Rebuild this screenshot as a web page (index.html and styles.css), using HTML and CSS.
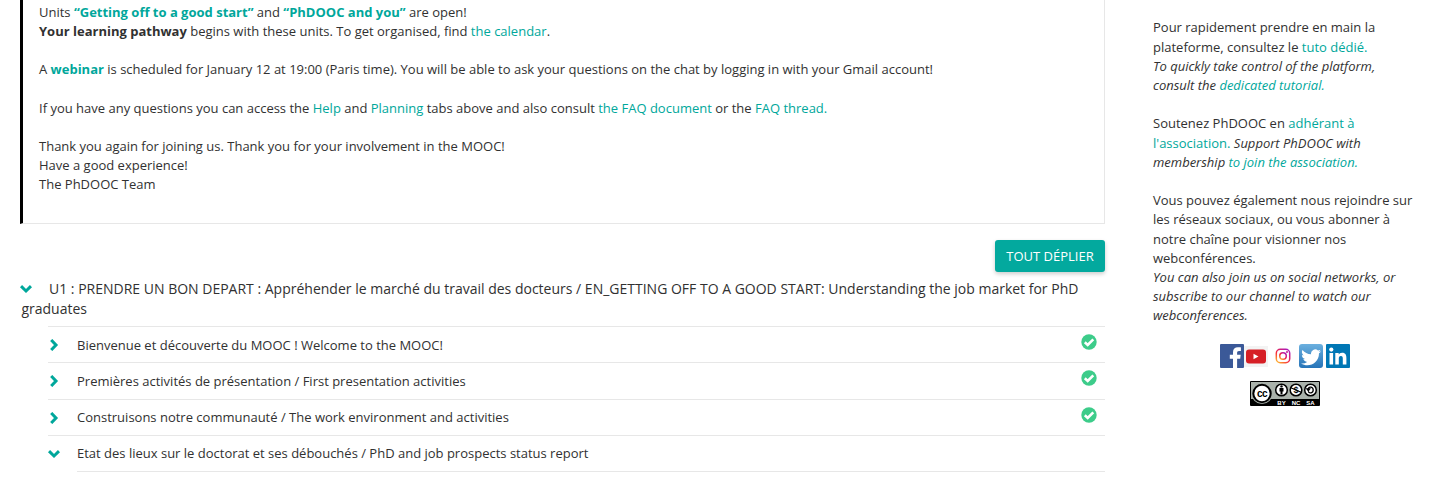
FILE: index.html
```html
<!DOCTYPE html>
<html lang="fr">
<head>
    <meta charset="UTF-8">
    <meta name="viewport" content="width=device-width, initial-scale=1.0">
    <title>PhDOOC</title>

    <link rel="stylesheet" href="styles.css">
</head>
<body>
    <div class="course">
        <main class="main-content">
            <!-- Welcome message -->
            <section class="message">
                <p>Units <a href="#" class="strong">“Getting off to a good start”</a> and <a href="#" class="strong">“PhDOOC and you”</a> are open!<br>
                <strong>Your learning pathway</strong> begins with these units. To get organised, find <a href="#">the calendar</a>.</p>
                <p>A <a href="#" class="strong">webinar</a> is scheduled for January 12 at 19:00 (Paris time). You will be able to ask your questions on the chat by logging in with your Gmail account!</p>
                <p>If you have any questions you can access the <a href="#">Help</a> and <a href="#">Planning</a> tabs above and also consult <a href="#">the FAQ document</a> or the <a href="#">FAQ thread.</a></p>
                <p>Thank you again for joining us. Thank you for your involvement in the MOOC!<br>
                Have a good experience!<br>
                The PhDOOC Team</p>
            </section>

            <div class="toolbar">
                <button class="btn-expand">TOUT DÉPLIER</button>
            </div>

            <!-- Course outline -->
            <section class="outline">
                <h3 class="section-title"><svg class="chevron" viewBox="0 0 12 12"><path d="M1 3.200 6 8l5-4.800"/></svg>U1 : PRENDRE UN BON DEPART : Appréhender le marché du travail des docteurs / EN_GETTING OFF TO A GOOD START: Understanding the job market for PhD graduates</h3>
                <ol class="subsections">
                    <li class="subsection">
                        <svg class="chevron" viewBox="0 0 12 12"><path d="M3.200 1 8 6l-4.800 5"/></svg>
                        <span>Bienvenue et découverte du MOOC ! Welcome to the MOOC!</span>
                        <svg class="check" viewBox="0 0 16 16"><circle cx="8" cy="8" r="7.700"/><path d="M3.800 8.300 6.700 11l5.600-5.700"/></svg>
                    </li>
                    <li class="subsection">
                        <svg class="chevron" viewBox="0 0 12 12"><path d="M3.200 1 8 6l-4.800 5"/></svg>
                        <span>Premières activités de présentation / First presentation activities</span>
                        <svg class="check" viewBox="0 0 16 16"><circle cx="8" cy="8" r="7.700"/><path d="M3.800 8.300 6.700 11l5.600-5.700"/></svg>
                    </li>
                    <li class="subsection">
                        <svg class="chevron" viewBox="0 0 12 12"><path d="M3.200 1 8 6l-4.800 5"/></svg>
                        <span>Construisons notre communauté / The work environment and activities</span>
                        <svg class="check" viewBox="0 0 16 16"><circle cx="8" cy="8" r="7.700"/><path d="M3.800 8.300 6.700 11l5.600-5.700"/></svg>
                    </li>
                    <li class="subsection">
                        <svg class="chevron" viewBox="0 0 12 12"><path d="M1 3.200 6 8l5-4.800"/></svg>
                        <span>Etat des lieux sur le doctorat et ses débouchés / PhD and job prospects status report</span>
                    </li>
                </ol>
                <div class="units"></div>
            </section>
        </main>

        <!-- Handouts -->
        <aside class="sidebar">
            <p>Pour rapidement prendre en main la plateforme, consultez le <a href="#">tuto dédié.</a><br>
            <em>To quickly take control of the platform, consult the <a href="#">dedicated tutorial.</a></em></p>
            <p>Soutenez PhDOOC en <a href="#">adhérant à l'association.</a> <em>Support PhDOOC with membership <a href="#">to join the association.</a></em></p>
            <p>Vous pouvez également nous rejoindre sur les réseaux sociaux, ou vous abonner à notre chaîne pour visionner nos webconférences.<br>
            <em>You can also join us on social networks, or subscribe to our channel to watch our webconferences.</em></p>

            <div class="social">
                <!-- Facebook -->
                <svg width="24" height="24" viewBox="0 0 24 24">
                    <rect width="24" height="24" rx="1" fill="#3b5998"/>
                    <path d="M13 24v-9.200H9.800v-4H13V8.300c0-3.200 2-5 4.900-5 1.300 0 2.600.1 3 .1v3.500h-1.900c-1.500 0-1.900.8-1.900 1.900v2h3.600l-.5 4h-3.100V24z" fill="#fff"/>
                </svg>
                <!-- YouTube -->
                <svg width="24" height="24" viewBox="0 0 24 24">
                    <rect y="2" width="24" height="21" fill="#f3f3f3"/>
                    <rect x="2" y="5.500" width="20" height="14" rx="3" fill="#d61f26"/>
                    <path d="M9.500 9.700v5.600l5-2.800z" fill="#fff"/>
                </svg>
                <!-- Instagram -->
                <svg class="instagram" width="24" height="24" viewBox="0 0 24 24">
                    <defs>
                        <linearGradient id="insta" x1="0.100" y1="1" x2="0.900" y2="0">
                            <stop offset="0" stop-color="#ffb52e"/>
                            <stop offset="0.450" stop-color="#f5233f"/>
                            <stop offset="1" stop-color="#a51cc4"/>
                        </linearGradient>
                    </defs>
                    <rect x="5.300" y="5.300" width="13.400" height="13.400" rx="4" fill="none" stroke="url(#insta)" stroke-width="1.500"/>
                    <circle cx="12" cy="12" r="3.300" fill="none" stroke="url(#insta)" stroke-width="1.500"/>
                    <circle cx="16" cy="8" r="1" fill="#c41c8d"/>
                </svg>
                <!-- Twitter -->
                <svg class="twitter" width="24" height="24" viewBox="0 0 24 24">
                    <defs>
                        <linearGradient id="tw" x1="0" y1="0" x2="0" y2="1">
                            <stop offset="0" stop-color="#6bb0df"/>
                            <stop offset="1" stop-color="#2674b8"/>
                        </linearGradient>
                    </defs>
                    <rect width="24" height="24" rx="3" fill="url(#tw)"/>
                    <path d="M22 7.200c-.7.300-1.400.5-2.200.6.800-.5 1.400-1.200 1.700-2.100-.8.400-1.600.8-2.500.9a4.100 4.100 0 0 0-6.900 3.700C8.600 10.100 5.600 8.500 3.500 6c-1.100 2-.5 4.200 1.200 5.400-.7 0-1.300-.2-1.800-.5 0 2 1.400 3.700 3.200 4.100-.6.200-1.200.2-1.800.1.500 1.600 2 2.700 3.800 2.800A8.200 8.200 0 0 1 2 19.500c7.900 4.600 18-.2 18-10.200.8-.6 1.500-1.300 2-2.100z" fill="#fff"/>
                </svg>
                <!-- LinkedIn -->
                <svg class="linkedin" width="24" height="24" viewBox="0 0 24 24">
                    <rect width="24" height="24" rx="1" fill="#0077b5"/>
                    <circle cx="5.300" cy="5.600" r="2.100" fill="#fff"/>
                    <rect x="3.500" y="9" width="3.600" height="11.500" fill="#fff"/>
                    <path d="M9.300 9h3.400v1.600c.5-.9 1.700-1.900 3.400-1.900 3.600 0 4.300 2.400 4.300 5.500v6.300h-3.600v-5.600c0-1.300 0-3-1.900-3s-2.100 1.400-2.100 2.900v5.700H9.300z" fill="#fff"/>
                </svg>
            </div>

            <!-- Creative Commons badge -->
            <svg class="license" width="70" height="25" viewBox="0 0 70 25">
                <rect width="70" height="25" rx="1" fill="#000"/>
                <rect x="1" y="1" width="68" height="17" fill="#aab2ab"/>
                <circle cx="12" cy="12.500" r="10.500" fill="#aab2ab"/>
                <circle cx="12" cy="12.500" r="8.700" fill="#fff" stroke="#000" stroke-width="2"/>
                <text class="cc" x="12" y="15.500">cc</text>
                <g fill="#fff" stroke="#000" stroke-width="1.500">
                    <circle cx="31.500" cy="9" r="5.800"/>
                    <circle cx="46" cy="9" r="5.800"/>
                    <circle cx="60.500" cy="9" r="5.800"/>
                </g>
                <circle cx="31.500" cy="5.400" r="1.200"/>
                <path d="M29.500 7h4v3.500h-1v3h-2v-3h-1z"/>
                <text class="symbol" x="46" y="12.200">$</text>
                <path d="m40.800 6.700 10.400 4.600" stroke="#000" stroke-width="1.200"/>
                <path d="M58.300 7.500c.8-2.200 4.900-1.700 4.900 1.500s-4.100 3.700-4.900 1.500M57 8h2.600l-1.300 1.600z" fill="none" stroke="#000" stroke-width="1.300"/>
                <text class="label" x="31.500" y="23.500">BY</text>
                <text class="label" x="46" y="23.500">NC</text>
                <text class="label" x="60.500" y="23.500">SA</text>
            </svg>
        </aside>
    </div>
</body>
</html>
```

FILE: styles.css
```css
* {
    margin: 0;
    padding: 0;
    box-sizing: border-box;
}

body {
    font-family: 'Open Sans', Arial, sans-serif;
    font-size: 13px;
    line-height: 19.2px;
    color: #313131;
    background: #fff;
    overflow: hidden;
}

a {
    color: #00a79b;
    text-decoration: none;
}

strong,
.strong {
    font-weight: 700;
}

.course {
    display: flex;
    gap: 48px;
    padding: 0 20px;
}

.main-content {
    width: 1085px;
    flex-shrink: 0;
}

/* Welcome message */
.message {
    height: 224px;
    padding: 2.6px 16px 0;
    border: 1px solid #e7e7e7;
    border-top: none;
    border-left: 3px solid #000;
}

.message p,
.sidebar p {
    margin-bottom: 19.2px;
}

.toolbar {
    display: flex;
    justify-content: flex-end;
    padding-top: 16px;
}

.btn-expand {
    width: 110px;
    height: 32px;
    border: none;
    border-radius: 3px;
    background: #03a99e;
    box-shadow: 0 2px 4px rgba(0, 0, 0, 0.2);
    color: #fff;
    font-family: inherit;
    font-size: 13px;
}

/* Course outline */
.section-title {
    padding: 7px 0 7.2px 1.4px;
    font-size: 14px;
    font-weight: 400;
    line-height: 20px;
}

.chevron {
    width: 12px;
    height: 12px;
    flex-shrink: 0;
    fill: none;
    stroke: #00a79b;
    stroke-width: 3;
}

.section-title .chevron {
    margin: 0 16.6px 0 -1px;
    vertical-align: -1px;
}

.subsections {
    margin-left: 28px;
    list-style: none;
}

.subsection {
    display: flex;
    align-items: center;
    height: 36.2px;
    padding-top: 0.8px;
    border-top: 1px solid #e7e7e7;
}

.subsection span {
    margin-left: 17px;
}

.check {
    width: 16px;
    height: 16px;
    margin: 0 8px 6px auto;
    fill: #3dcc8a;
}

.check path {
    fill: none;
    stroke: #fff;
    stroke-width: 2.6;
}

.units {
    margin-left: 57px;
    border-top: 1px solid #e7e7e7;
}

/* Handouts */
.sidebar {
    width: 264px;
    padding-top: 18.4px;
}

.sidebar p:last-of-type {
    margin-bottom: 18.4px;
}

.social {
    display: flex;
    justify-content: center;
    margin-bottom: 13px;
}

.instagram {
    margin: 0 4px 0 3px;
}

.linkedin {
    margin-left: 3px;
}

.license {
    display: block;
    margin: 0 auto;
}

.license text {
    font-family: 'Liberation Sans', Arial, sans-serif;
    font-weight: 700;
    text-anchor: middle;
}

.cc {
    font-size: 10px;
    letter-spacing: -0.5px;
}

.symbol {
    font-size: 9px;
}

.license .label {
    font-size: 6px;
    fill: #fff;
}
```
